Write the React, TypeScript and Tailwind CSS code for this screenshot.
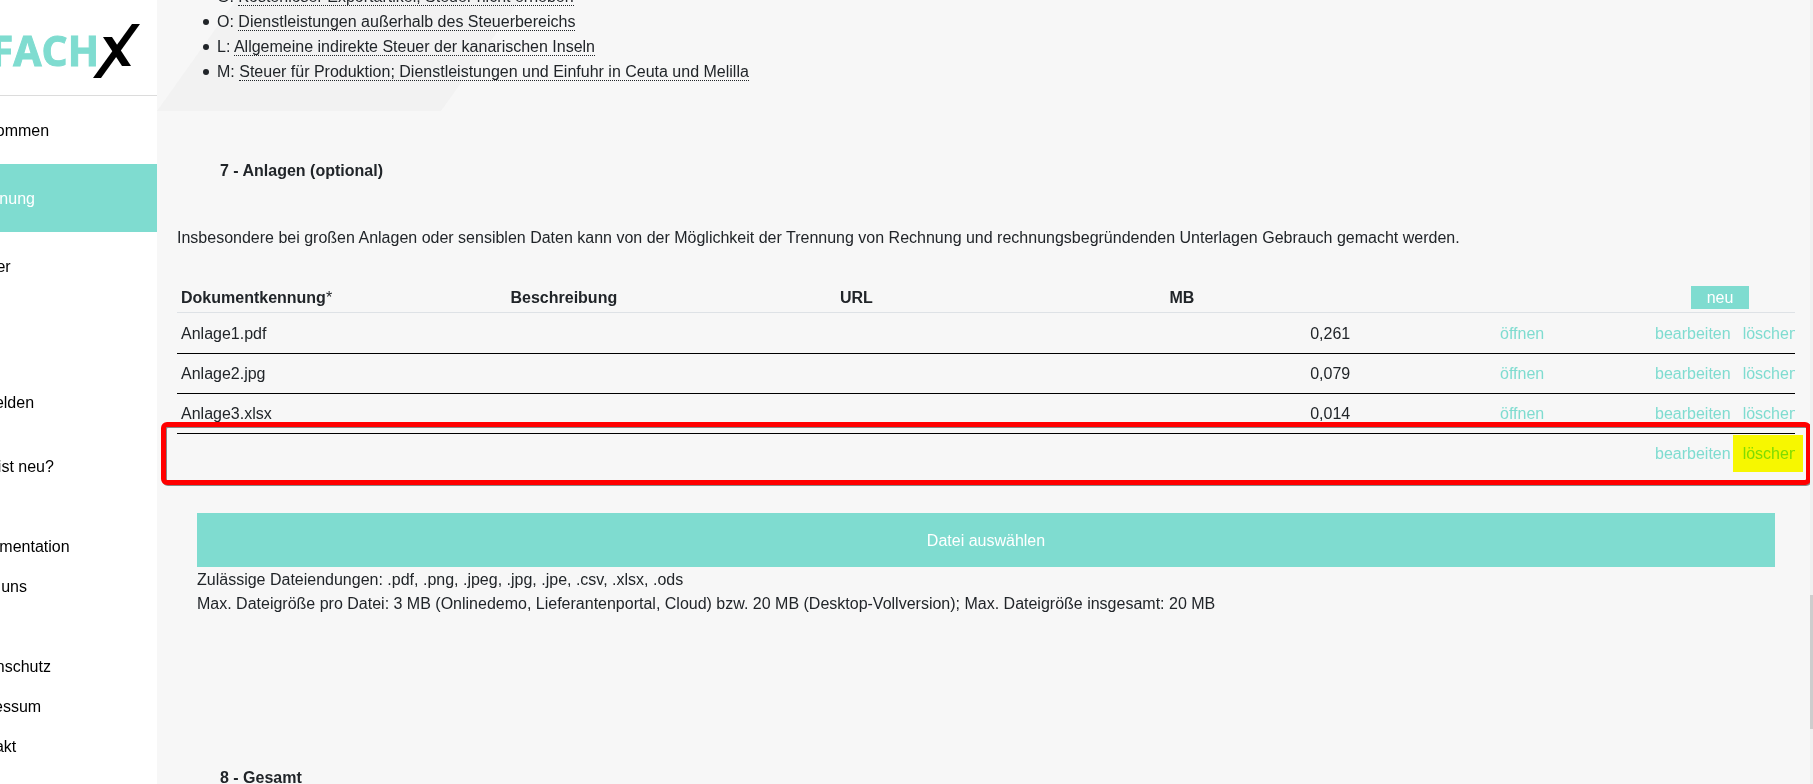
import React from "react";

const mainLinks = [
    { label: "Willkommen", active: false },
    { label: "Rechnung", active: true },
    { label: "Viewer", active: false },
    { label: "", active: false },
    { label: "Anmelden", active: false },
];

const subLinks = [["Was ist neu?"], ["Dokumentation", "Über uns"], ["Datenschutz", "Impressum", "Kontakt"]];

const taxCodes = [
    { code: "G", text: "Kostenloser Exportartikel; Steuer nicht erheben" },
    { code: "O", text: "Dienstleistungen außerhalb des Steuerbereichs" },
    { code: "L", text: "Allgemeine indirekte Steuer der kanarischen Inseln" },
    { code: "M", text: "Steuer für Produktion; Dienstleistungen und Einfuhr in Ceuta und Melilla" },
];

const attachments = [
    { name: "Anlage1.pdf", size: "0,261" },
    { name: "Anlage2.jpg", size: "0,079" },
    { name: "Anlage3.xlsx", size: "0,014" },
    { name: "", size: "" },
];

function Logo() {
    return (
        <div className="flex h-24 items-start justify-end border-b border-[#dcdcdc] pt-4 pr-4">
            <svg viewBox="0 0 204 64" className="h-16 w-[204px] shrink-0" role="img" aria-label="EINFACHX">
                <text
                    x="162"
                    y="50"
                    textAnchor="end"
                    fill="#7fdcd0"
                    stroke="#7fdcd0"
                    strokeWidth="1"
                    fontFamily="'Open Sans', sans-serif"
                    fontWeight="700"
                    fontSize="41"
                >
                    EINFACH
                </text>
                <path d="M195 8h8L164 62h-8z" fill="#000" />
                <path d="M166 21h9l19 29h-9z" fill="#000" />
            </svg>
        </div>
    );
}

function Sidebar() {
    return (
        <aside className="flex w-[157px] shrink-0 justify-end overflow-hidden bg-white text-black">
            {/* wider than the visible strip, scrolled in from the right */}
            <div className="w-60 shrink-0">
                <Logo />
                <nav>
                    {mainLinks.map((link, index) =>
                        link.label ? (
                            <a
                                key={index}
                                href="#"
                                className={`flex h-[68px] items-center pt-0.5 pl-[45px] ${link.active ? "bg-[#7fdcd0] text-white" : ""}`}
                            >
                                {link.label}
                            </a>
                        ) : (
                            <div key={index} className="h-[68px]" />
                        )
                    )}
                    <div className="flex flex-col gap-10 pt-[10px]">
                        {subLinks.map((group) => (
                            <div key={group[0]}>
                                {group.map((label) => (
                                    <a key={label} href="#" className="flex h-10 items-center pt-0.5 pl-[45px]">
                                        {label}
                                    </a>
                                ))}
                            </div>
                        ))}
                    </div>
                </nav>
            </div>
        </aside>
    );
}

function AttachmentTable() {
    return (
        <div className="relative">
            <table className="w-full table-fixed border-collapse text-left">
                <thead>
                    <tr className="h-[30px] border-b border-[#dee2e6] [&>th]:pt-0.5">
                        <th className="px-1">
                            Dokumentkennung<span className="font-normal">*</span>
                        </th>
                        <th className="px-1">Beschreibung</th>
                        <th className="px-1">URL</th>
                        <th className="px-1">MB</th>
                        <th className="w-[150px]" />
                        <th className="w-[150px] text-center font-normal">
                            <button className="mx-auto block h-[23px] w-[58px] bg-[#7fdcd0] leading-[23px] text-white">neu</button>
                        </th>
                    </tr>
                </thead>
                <tbody className="[&>tr+tr]:border-t [&>tr+tr]:border-black [&_td]:pt-0.5">
                    {attachments.map((file, index) => (
                        <tr key={index} className="h-10 first:h-[41px]">
                            <td className="px-1">{file.name}</td>
                            <td />
                            <td />
                            <td className="px-1 text-center">{file.size}</td>
                            <td className="px-[5px] text-[#7fdcd0]">{file.name && <a href="#">öffnen</a>}</td>
                            <td className="overflow-hidden pl-[10px] text-[#7fdcd0]">
                                <div className="flex gap-3 overflow-hidden">
                                    <a href="#">bearbeiten</a>
                                    <a href="#">löschen</a>
                                </div>
                            </td>
                        </tr>
                    ))}
                </tbody>
            </table>

            {/* Marker around the empty row */}
            <div className="pointer-events-none absolute -right-4 -bottom-3 -left-4 h-[63px] rounded-md border-[5px] border-[#ff0000] drop-shadow-[1px_1px_0_#888]" />
            <div className="pointer-events-none absolute -right-2 bottom-px h-[37px] w-[70px] bg-[#ffff00] mix-blend-multiply" />
        </div>
    );
}

export default function App() {
    return (
        <div className="flex h-screen overflow-hidden bg-[#f7f7f7] font-['Liberation_Sans',Arial,sans-serif] text-base leading-6 text-[#212529]">
            <Sidebar />

            <main className="relative min-w-0 flex-1 overflow-hidden">
                <svg className="absolute top-0 left-0 h-[111px] w-[363px]" viewBox="0 0 363 111" aria-hidden="true">
                    <path d="M79 0h284l-79 111H0z" fill="#f2f2f2" />
                </svg>

                <div className="relative -mt-4 pr-[15px] pl-5">
                    <ul className="pl-[26px] leading-[25px]">
                        {taxCodes.map((tax) => (
                            <li
                                key={tax.code}
                                className="flex items-center gap-2 before:size-[6px] before:rounded-full before:bg-[#212529]"
                            >
                                <span>
                                    {tax.code}: <abbr className="border-b border-dotted border-[#212529] no-underline">{tax.text}</abbr>
                                </span>
                            </li>
                        ))}
                    </ul>

                    <h2 className="mt-[75px] pl-[43px] font-bold">7 - Anlagen (optional)</h2>
                    <p className="mt-[43px] mb-8">
                        Insbesondere bei großen Anlagen oder sensiblen Daten kann von der Möglichkeit der Trennung von Rechnung und
                        rechnungsbegründenden Unterlagen Gebrauch gemacht werden.
                    </p>

                    <AttachmentTable />

                    <div className="mt-10 px-5">
                        <button className="block h-[54px] w-full bg-[#7fdcd0] pt-0.5 text-white">Datei auswählen</button>
                        <p className="pt-px">Zulässige Dateiendungen: .pdf, .png, .jpeg, .jpg, .jpe, .csv, .xlsx, .ods</p>
                        <p>
                            Max. Dateigröße pro Datei: 3 MB (Onlinedemo, Lieferantenportal, Cloud) bzw. 20 MB (Desktop-Vollversion); Max.
                            Dateigröße insgesamt: 20 MB
                        </p>
                    </div>

                    <h2 className="mt-[150px] pl-[43px] font-bold">8 - Gesamt</h2>
                </div>
            </main>

            {/* Scrollbar */}
            <div className="flex w-[3px] shrink-0 flex-col bg-[#f0f0f0]">
                <div className="grow-[595]" />
                <div className="h-[134px] bg-[#cdcdcd]" />
                <div className="grow-[55]" />
            </div>
        </div>
    );
}
